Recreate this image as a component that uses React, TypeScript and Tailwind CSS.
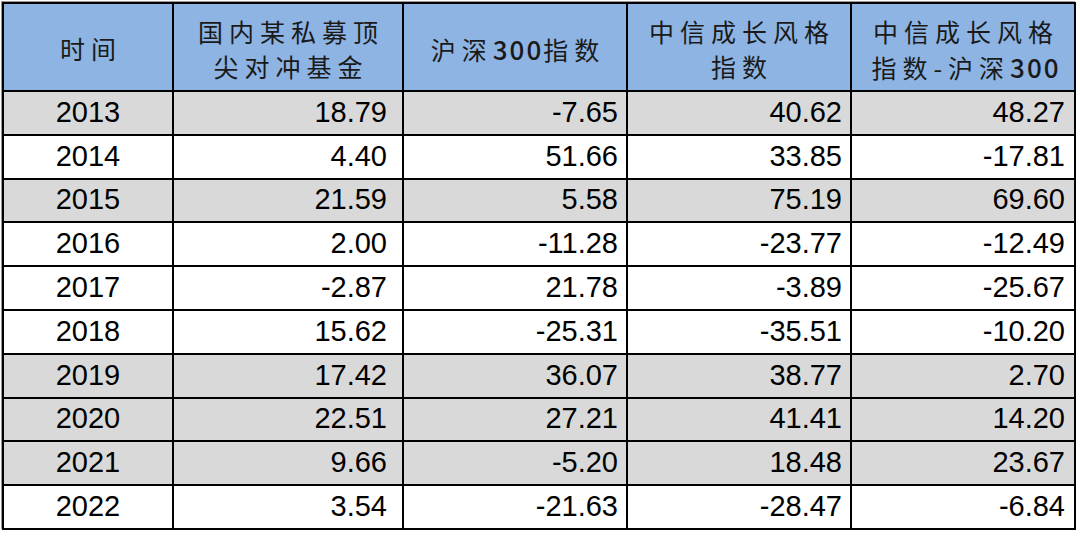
import React from "react";

const rows: [string, string, string, string, string, boolean][] = [
  ["2013", "18.79", "-7.65", "40.62", "48.27", true],
  ["2014", "4.40", "51.66", "33.85", "-17.81", false],
  ["2015", "21.59", "5.58", "75.19", "69.60", true],
  ["2016", "2.00", "-11.28", "-23.77", "-12.49", false],
  ["2017", "-2.87", "21.78", "-3.89", "-25.67", false],
  ["2018", "15.62", "-25.31", "-35.51", "-10.20", false],
  ["2019", "17.42", "36.07", "38.77", "2.70", true],
  ["2020", "22.51", "27.21", "41.41", "14.20", true],
  ["2021", "9.66", "-5.20", "18.48", "23.67", true],
  ["2022", "3.54", "-21.63", "-28.47", "-6.84", false],
];

function Line({ text }: { text: string }) {
  const parts = text.split(/(\d+)/).filter((p) => p !== "");
  return (
    <span className="pl-[6px] whitespace-nowrap">
      {parts.map((p, i) =>
        /^\d+$/.test(p) ? (
          <span key={i} className="tracking-[2px] font-medium text-[26px]">
            {p}
          </span>
        ) : (
          <span key={i}>{p}</span>
        )
      )}
    </span>
  );
}

function H({ lines, pt = "pt-[4px]" }: { lines: string[]; pt?: string }) {
  return (
    <div
      className={`bg-[#8db4e2] flex flex-col items-center justify-center text-[25px] leading-[35px] tracking-[6px] text-[#1a1a1a] font-['Noto_Sans_CJK_SC','Noto_Sans',sans-serif] ${pt}`}
    >
      {lines.map((l, i) => (
        <Line key={i} text={l} />
      ))}
    </div>
  );
}

export default function App() {
  return (
    <div className="w-[1080px] h-[536px] bg-white pl-[2px] pt-[2px]">
      <div className="w-[1074px] h-[528px] border-2 border-black bg-black shadow-[-1px_-1px_0_#9a9a9a] grid grid-cols-[168px_228px_222px_222px_222px] grid-rows-[86px_repeat(10,1fr)] gap-x-[2px] gap-y-[2px]">
        <H lines={["时间"]} pt="pt-[2px]" />
        <H lines={["国内某私募顶", "尖对冲基金"]} />
        <H lines={["沪深300指数"]} pt="pt-[4px]" />
        <H lines={["中信成长风格", "指数"]} />
        <H lines={["中信成长风格", "指数-沪深300"]} />
        {rows.map(([y, a, b, c, d, gray]) => {
          const bg = gray ? "bg-[#d9d9d9]" : "bg-white";
          const base = `${bg} flex items-center text-[29px] leading-none text-black pb-[1px] font-['Liberation_Sans',Arial,sans-serif]`;
          return (
            <React.Fragment key={y}>
              <div className={`${base} justify-center`}>{y}</div>
              <div className={`${base} justify-end pr-[15px]`}>{a}</div>
              <div className={`${base} justify-end pr-[8px]`}>{b}</div>
              <div className={`${base} justify-end pr-[8px]`}>{c}</div>
              <div className={`${base} justify-end pr-[9px]`}>{d}</div>
            </React.Fragment>
          );
        })}
      </div>
    </div>
  );
}
